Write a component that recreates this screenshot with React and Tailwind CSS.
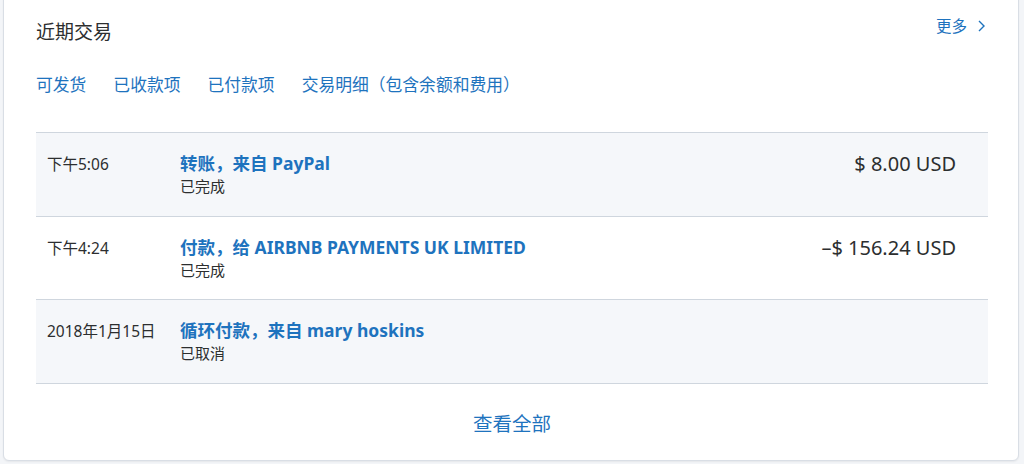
const tabs = ["可发货", "已收款项", "已付款项", "交易明细（包含余额和费用）"];

const rows = [
  { time: "下午5:06", title: "转账，来自 PayPal", status: "已完成", amount: "$ 8.00 USD", shaded: true },
  { time: "下午4:24", title: "付款，给 AIRBNB PAYMENTS UK LIMITED", status: "已完成", amount: "–$ 156.24 USD", shaded: false },
  { time: "2018年1月15日", title: "循环付款，来自 mary hoskins", status: "已取消", amount: "", shaded: true },
];

const App = () => {
  return (
    <div
      className="h-[464px] w-[1024px] overflow-hidden bg-[#f3f5f8] pl-[3px] pr-[5px]"
      style={{ fontFamily: '"Noto Sans", "Noto Sans CJK SC", sans-serif' }}
    >
      <div className="-mt-[6px] h-[467px] rounded-md border border-[#d9dee5] bg-white pl-[32px] pr-[30px] shadow-[0_1px_2px_rgba(0,0,0,0.06)]">
        {/* header */}
        <div className="flex items-start justify-between pt-[25px]">
          <h2 className="text-[19px] leading-[25px] text-[#2c2e2f]">近期交易</h2>
          <a className="mt-[-4px] mr-[3px] flex items-center gap-[11px] text-[15.5px] leading-[20px] text-[#1e73be]">
            更多
            <svg width="7" height="12" viewBox="0 0 7 12" fill="none">
              <path d="M1 1l5 5-5 5" stroke="#1e73be" strokeWidth="1.4" />
            </svg>
          </a>
        </div>

        {/* tabs */}
        <div className="mt-[29px] flex gap-[27px] text-[16.8px] leading-[22px] text-[#1e73be]">
          {tabs.map((t) => (
            <span key={t}>{t}</span>
          ))}
        </div>

        {/* list */}
        <div className="mt-[36px] border-t border-[#cfd6de]">
          {rows.map((r) => (
            <div
              key={r.time}
              className={`flex h-[83.5px] items-start border-b border-[#cfd6de] pt-[19px] ${r.shaded ? "bg-[#f5f7fa]" : "bg-white"}`}
            >
              <div className="w-[144px] shrink-0 pl-[11px] pt-[3px] text-[15.5px] leading-[18px] text-[#2c2e2f]">
                {r.time}
              </div>
              <div className="flex-1">
                <div className="text-[17.5px] font-bold leading-[22px] text-[#1e73be]">{r.title}</div>
                <div className="mt-[3px] text-[15px] leading-[19px] text-[#2c2e2f]">{r.status}</div>
              </div>
              <div className="pr-[32px] text-[20px] leading-[24px] text-[#2c2e2f]">{r.amount}</div>
            </div>
          ))}
        </div>

        {/* footer */}
        <div className="flex justify-center pt-[27px]">
          <a className="text-[19.5px] leading-[26px] text-[#1e73be]">查看全部</a>
        </div>
      </div>
    </div>
  );
};

export default App;
